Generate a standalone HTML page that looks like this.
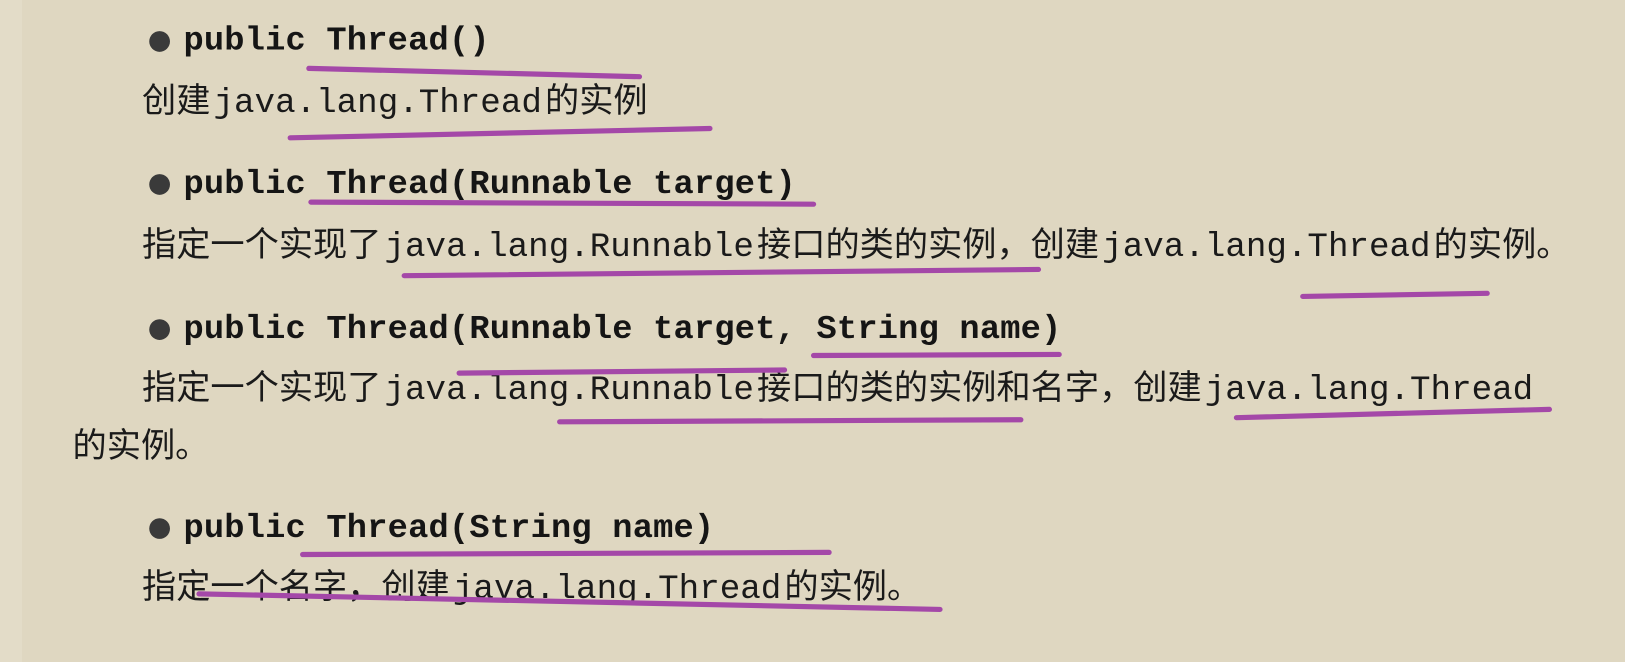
<!DOCTYPE html>
<html><head><meta charset="utf-8"><style>
html,body{margin:0;padding:0;}
body{width:1625px;height:662px;overflow:hidden;background:#dfd7c1;}
#w{position:absolute;left:0;top:0;width:1568px;height:639px;transform:scale(1.0364);transform-origin:0 0;}
.h{position:absolute;left:177px;font:bold 32.5px/40px "Liberation Mono",monospace;color:#151515;white-space:pre;letter-spacing:0.2px}
.b{position:absolute;left:137px;font:33px/40px "Liberation Sans","Noto Sans CJK SC",sans-serif;color:#1a1a1a;white-space:pre}
.b code{font:33px "Liberation Mono",monospace;margin:0 3px}
.dot{position:absolute;left:144px;width:20px;height:20px;border-radius:50%;background:#3a3a3a}
</style></head><body>
<div style="position:absolute;left:0;top:0;width:22px;height:662px;background:#e3dcc8"></div>
<div id="w">
<div class="dot" style="top:30px"></div><div class="h" style="top:20px">public Thread()</div>
<div class="b" style="top:77px">创建<code>java.lang.Thread</code>的实例</div>
<div class="dot" style="top:168px"></div><div class="h" style="top:158px">public Thread(Runnable target)</div>
<div class="b" style="top:216px">指定一个实现了<code>java.lang.Runnable</code>接口的类的实例，创建<code>java.lang.Thread</code>的实例。</div>
<div class="dot" style="top:308px"></div><div class="h" style="top:298px">public Thread(Runnable target, String name)</div>
<div class="b" style="top:354px">指定一个实现了<code>java.lang.Runnable</code>接口的类的实例和名字，创建<code>java.lang.Thread</code></div>
<div class="b" style="top:410px;left:70px">的实例。</div>
<div class="dot" style="top:500px"></div><div class="h" style="top:490px">public Thread(String name)</div>
<div class="b" style="top:546px">指定一个名字，创建<code>java.lang.Thread</code>的实例。</div>
<svg width="1568" height="639" style="position:absolute;left:0;top:0" fill="none" stroke="#a448a8" stroke-width="5" stroke-linecap="round">
<path d="M298 66 L617 74"/>
<path d="M280 133 L685 124"/>
<path d="M300 195 L785 197"/>
<path d="M390 266 L1002 260"/>
<path d="M1257 286 L1435 283"/>
<path d="M443 360 L757 357"/>
<path d="M785 343 L1022 342"/>
<path d="M540 407 L985 405"/>
<path d="M1193 403 L1495 395"/>
<path d="M292 535 L800 533"/>
<path d="M192 573 L907 588"/>
</svg>
</div>
</body></html>
